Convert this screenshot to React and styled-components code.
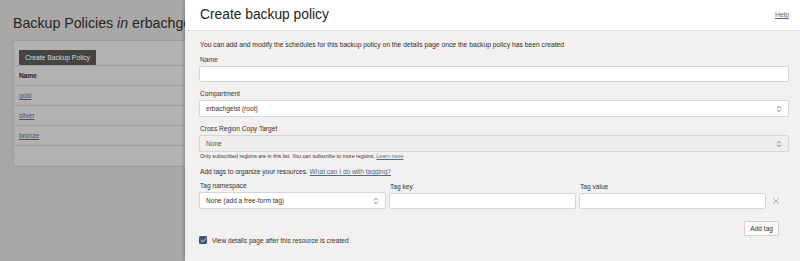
import React from "react";
import styled, { createGlobalStyle } from "styled-components";
import { ChevronsUpDown, X, Check } from "lucide-react";

const Global = createGlobalStyle`
  html, body { margin: 0; padding: 0; }
  body { font-family: "Liberation Sans", Arial, sans-serif; background: #a9a8a6; }
  * { box-sizing: border-box; }
`;

const Screen = styled.div`
  width: 800px;
  height: 261px;
  display: flex;
  overflow: hidden;
  background: #a9a8a6;
`;

const Page = styled.div`
  width: 185px;
  flex-shrink: 0;
  overflow: hidden;
  padding: 14px 0 0 13px;
`;

const PageTitle = styled.h1`
  margin: 0;
  font-weight: normal;
  font-size: 14.2px;
  line-height: 18px;
  color: #262524;
  white-space: nowrap;
  em { font-style: italic; }
`;

const Table = styled.div`
  margin-top: 8px;
  width: 260px;
  border: 1px solid #9e9d9b;
  background: #b3b2b0;
`;

const TableBar = styled.div`
  height: 25px;
  padding: 5px 5px;
  border-bottom: 1px solid #9e9d9b;
`;

const DarkButton = styled.div`
  display: inline-flex;
  align-items: center;
  height: 15px;
  padding: 0 6px;
  background: #464441;
  color: #d8d7d5;
  font-size: 6.8px;
  border-radius: 1px;
`;

const Row = styled.div`
  height: 20px;
  display: flex;
  align-items: center;
  padding-left: 5px;
  border-bottom: ${(p) => (p.$last ? "none" : "1px solid #9e9d9b")};
  font-size: 6.6px;
  font-weight: ${(p) => (p.$head ? "bold" : "normal")};
  color: #222;
`;

const RowLink = styled.span`
  color: #4b5368;
  text-decoration: underline;
`;

const Panel = styled.div`
  flex: 1;
  display: flex;
  flex-direction: column;
  background: #f2f1ef;
  box-shadow: -1px 0 3px rgba(0, 0, 0, 0.25);
  position: relative;
`;

const Header = styled.div`
  height: 31px;
  flex-shrink: 0;
  background: #ffffff;
  border-bottom: 1px solid #dcdbd9;
  display: flex;
  align-items: center;
  justify-content: space-between;
  padding: 0 11px 1px 15px;
`;

const Title = styled.h2`
  margin: 0;
  font-weight: normal;
  font-size: 13.8px;
  color: #222;
`;

const Help = styled.span`
  font-size: 6.8px;
  color: #5a6478;
  text-decoration: underline;
`;

const Body = styled.div`
  padding: 9px 11px 0 14px;
  display: flex;
  flex-direction: column;
  color: #2f2e2d;
`;

const Intro = styled.div`
  font-size: 6.75px;
  line-height: 10px;
  padding-left: 1px;
`;

const Label = styled.div`
  font-size: 6.6px;
  line-height: 12px;
  padding-left: 1px;
  margin-top: ${(p) => p.$mt ?? 6}px;
  color: #333;
`;

const Input = styled.div`
  height: ${(p) => p.$h ?? 16}px;
  background: ${(p) => (p.$disabled ? "#efeeec" : "#ffffff")};
  border: 1px solid #d6d5d3;
  border-radius: 2px;
  display: flex;
  align-items: center;
  justify-content: space-between;
  padding: 0 5px 0 6px;
  font-size: 6.6px;
  color: ${(p) => (p.$disabled ? "#555" : "#333")};
`;

const Helper = styled.div`
  font-size: 5.3px;
  line-height: 8px;
  padding-left: 1px;
  color: #333;
`;

const Link = styled.span`
  color: #4f6a8c;
  text-decoration: underline;
`;

const TagsIntro = styled.div`
  margin-top: 7px;
  font-size: 6.6px;
  line-height: 10px;
  padding-left: 1px;
`;

const TagGrid = styled.div`
  display: grid;
  grid-template-columns: 187px 187px 187px 1fr;
  column-gap: 3px;
  margin-top: 3px;
  align-items: end;
`;

const RemoveCell = styled.div`
  height: 16px;
  display: flex;
  align-items: center;
  padding-left: 2px;
  color: #777;
`;

const AddRow = styled.div`
  display: flex;
  justify-content: flex-end;
  padding-right: 10px;
  margin-top: 12px;
`;

const LightButton = styled.div`
  height: 15px;
  display: flex;
  align-items: center;
  padding: 0 5px;
  background: #fbfbfa;
  border: 1px solid #d2d1cf;
  border-radius: 1px;
  font-size: 6.6px;
  color: #333;
`;

const CheckRow = styled.div`
  display: flex;
  align-items: center;
  gap: 5px;
  height: 10px;
  margin-top: -1px;
  font-size: 6.6px;
  color: #333;
`;

const Box = styled.div`
  width: 8px;
  height: 8px;
  border-radius: 1.5px;
  background: #3c5679;
  display: flex;
  align-items: center;
  justify-content: center;
  color: #fff;
`;

function Select({ children, disabled }) {
  return (
    <Input $h={17} $disabled={disabled}>
      <span>{children}</span>
      <ChevronsUpDown size={8} strokeWidth={2} color="#444" />
    </Input>
  );
}

export default function App() {
  return (
    <>
      <Global />
      <Screen>
        <Page>
          <PageTitle>
            Backup Policies <em>in</em> erbachgeist
          </PageTitle>
          <Table>
            <TableBar>
              <DarkButton>Create Backup Policy</DarkButton>
            </TableBar>
            <Row $head>Name</Row>
            <Row><RowLink>gold</RowLink></Row>
            <Row><RowLink>silver</RowLink></Row>
            <Row><RowLink>bronze</RowLink></Row>
            <Row $last />
          </Table>
        </Page>
        <Panel>
          <Header>
            <Title>Create backup policy</Title>
            <Help>Help</Help>
          </Header>
          <Body>
            <Intro>
              You can add and modify the schedules for this backup policy on the details page once the backup policy has been created
            </Intro>
            <Label $mt={4}>Name</Label>
            <Input />
            <Label>Compartment</Label>
            <Select>erbachgeist (root)</Select>
            <Label>Cross Region Copy Target</Label>
            <Select disabled>None</Select>
            <Helper>
              Only subscribed regions are in this list. You can subscribe to more regions. <Link>Learn more</Link>
            </Helper>
            <TagsIntro>
              Add tags to organize your resources. <Link>What can I do with tagging?</Link>
            </TagsIntro>
            <TagGrid>
              <div>
                <Label $mt={0}>Tag namespace</Label>
                <Select>None (add a free-form tag)</Select>
              </div>
              <div>
                <Label $mt={0}>Tag key</Label>
                <Input />
              </div>
              <div>
                <Label $mt={0}>Tag value</Label>
                <Input />
              </div>
              <RemoveCell>
                <X size={10} strokeWidth={1.3} />
              </RemoveCell>
            </TagGrid>
            <AddRow>
              <LightButton>Add tag</LightButton>
            </AddRow>
            <CheckRow>
              <Box>
                <Check size={7} strokeWidth={3} />
              </Box>
              View details page after this resource is created
            </CheckRow>
          </Body>
        </Panel>
      </Screen>
    </>
  );
}
